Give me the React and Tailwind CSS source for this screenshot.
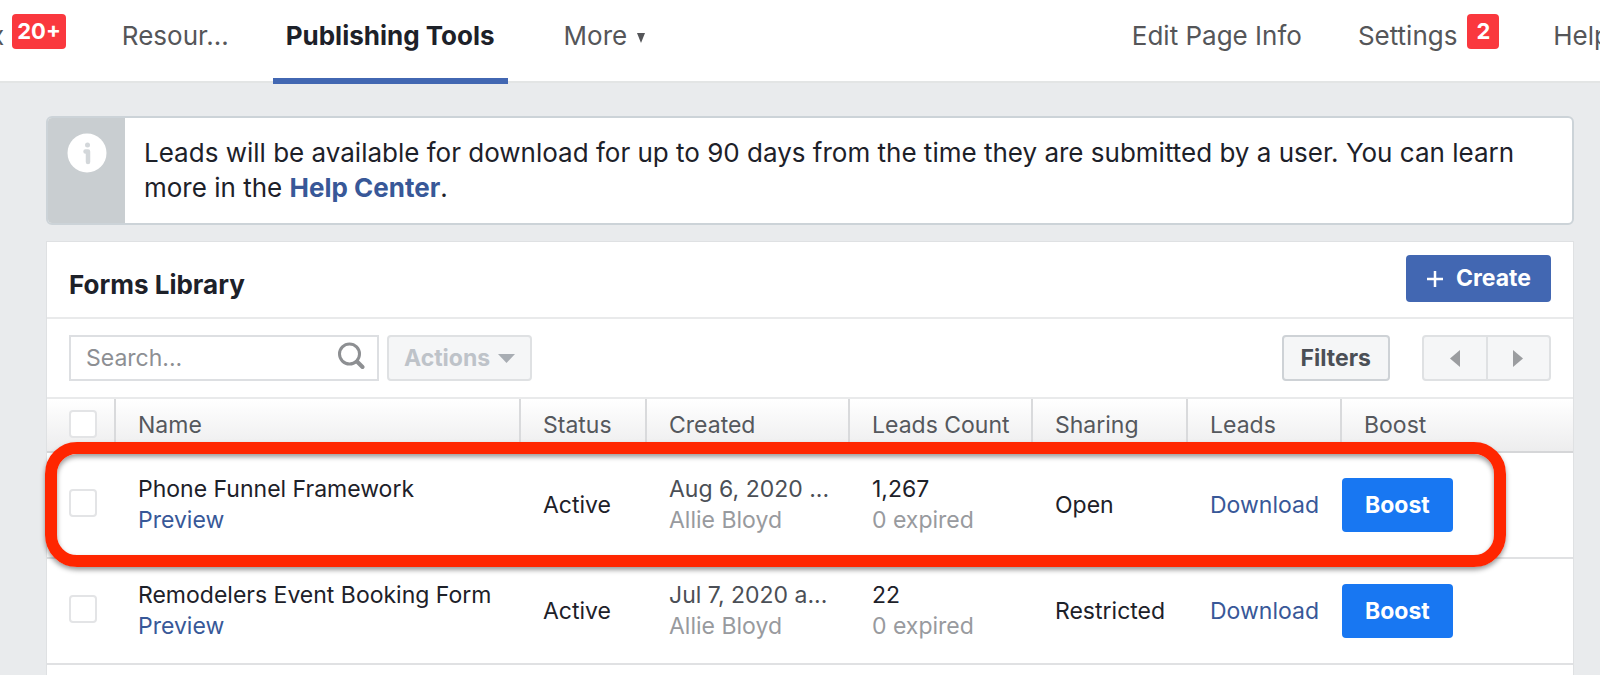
import React, { useState } from 'react';

const forms = [
  {
    id: 1,
    name: 'Phone Funnel Framework',
    status: 'Active',
    created: 'Aug 6, 2020 ...',
    author: 'Allie Bloyd',
    leads: '1,267',
    expired: '0 expired',
    sharing: 'Open',
  },
  {
    id: 2,
    name: 'Remodelers Event Booking Form',
    status: 'Active',
    created: 'Jul 7, 2020 a...',
    author: 'Allie Bloyd',
    leads: '22',
    expired: '0 expired',
    sharing: 'Restricted',
  },
];

const columns = ['Name', 'Status', 'Created', 'Leads Count', 'Sharing', 'Leads', 'Boost'];

const Badge = ({ children }) => (
  <span className="rounded-sm bg-[#fa383e] px-[5px] text-[22px] leading-[35px] font-bold text-white">
    {children}
  </span>
);

const Checkbox = ({ label, checked, onChange }) => (
  <input
    type="checkbox"
    aria-label={label}
    checked={checked}
    onChange={onChange}
    className="block size-7 appearance-none rounded-sm border-2 border-[#e3e4e6] bg-white checked:bg-[#4267b2]"
  />
);

const TopNav = () => (
  <nav className="flex h-[83px] items-start justify-between border-b-2 border-[#e3e5e5] bg-white text-[26px] leading-[72px] whitespace-nowrap text-[#555659]">
    <div className="flex">
      <a href="#inbox" className="-ml-[10px] flex items-start gap-2">
        x
        <span className="flex pt-[14px]">
          <Badge>20+</Badge>
        </span>
      </a>
      <a href="#resources" className="ml-14">Resour...</a>
      <a
        href="#publishing"
        className="ml-11 h-[84px] border-b-[6px] border-[#4267b2] px-[13px] font-bold text-[#1d2129]"
      >
        Publishing Tools
      </a>
      <button type="button" className="ml-14 flex h-[72px] items-center gap-[10px]">
        More
        <svg className="mt-1 h-[10px] w-2" viewBox="0 0 9 11" fill="currentColor">
          <path d="M0 0h9L4.500 11z" />
        </svg>
      </button>
    </div>
    <div className="-mr-[10px] flex">
      <a href="#edit">Edit Page Info</a>
      <a href="#settings" className="ml-14 flex items-start gap-[10px]">
        Settings
        <span className="flex pt-[14px]">
          <Badge>
            <span className="px-1">2</span>
          </Badge>
        </span>
      </a>
      <a href="#help" className="ml-[54px]">Help</a>
    </div>
  </nav>
);

const Notice = () => (
  <div className="flex overflow-hidden rounded-md border-2 border-[#ccd3d8] bg-white">
    <div className="flex w-[77px] shrink-0 justify-center bg-[#c9ced1] pt-[15px]">
      <svg className="size-10" viewBox="0 0 40 40">
        <circle cx="20" cy="20" r="19.500" fill="#fff" />
        <circle cx="20.500" cy="12" r="2.500" fill="#d3d7da" />
        <path d="M18.500 18.500h2.500v10.500" fill="none" stroke="#d3d7da" strokeWidth="4.500" strokeLinecap="round" strokeLinejoin="round" />
      </svg>
    </div>
    <p className="px-[19px] pt-[17px] pb-[18px] text-[26px] leading-[35px] text-[#1d2129]">
      Leads will be available for download for up to 90 days from the time they are submitted by a user. You can learn
      more in the{' '}
      <a href="#help-center" className="font-bold text-[#385898]">Help Center</a>.
    </p>
  </div>
);

const Toolbar = ({ search, setSearch }) => (
  <div className="flex items-center border-b-2 border-[#e9eaeb] px-[22px] py-4">
    <div className="flex h-[46px] w-[310px] items-center border-2 border-[#dddfe2] bg-white pr-3 pl-[15px]">
      <input
        type="text"
        aria-label="Search..."
        placeholder="Search..."
        value={search}
        onChange={(e) => setSearch(e.target.value)}
        className="min-w-0 flex-1 outline-none placeholder:text-[#8d8f93]"
      />
      <svg className="-mt-1 size-7" viewBox="0 0 28 28" fill="none" stroke="#8d8f92">
        <circle cx="12.500" cy="12" r="10" strokeWidth="3" />
        <path d="M20 19.500l5.500 5.500" strokeWidth="4" strokeLinecap="round" />
      </svg>
    </div>
    <button
      type="button"
      disabled
      className="ml-2 flex h-[46px] items-center gap-2 rounded-sm border-2 border-[#dfe1e3] bg-[#f5f6f7] px-[15px] font-bold text-[#bec3c9]"
    >
      Actions
      <svg className="h-[9px] w-[17px]" viewBox="0 0 17 9" fill="#a8adb3">
        <path d="M0 0h17L8.500 9z" />
      </svg>
    </button>
    <button
      type="button"
      className="ml-auto h-[46px] rounded-sm border-2 border-[#ced2d6] bg-[#f5f6f7] px-[17px] font-bold text-[#4b4f56]"
    >
      Filters
    </button>
    <div className="ml-8 flex h-[46px] w-[129px] rounded-sm border-2 border-[#dfe1e3] bg-[#f5f6f7] text-[#9b9da0]">
      <button type="button" aria-label="Previous" className="flex flex-1 items-center justify-center border-r-2 border-[#dfe1e3]">
        <svg className="h-[17px] w-[10px]" viewBox="0 0 10 17" fill="currentColor">
          <path d="M10 0v17L0 8.500z" />
        </svg>
      </button>
      <button type="button" aria-label="Next" className="flex flex-1 items-center justify-center">
        <svg className="h-[17px] w-[10px]" viewBox="0 0 10 17" fill="currentColor">
          <path d="M0 0v17l10-8.500z" />
        </svg>
      </button>
    </div>
  </div>
);

const FormsTable = ({ rows, selected, setSelected }) => {
  const allSelected = rows.length > 0 && selected.length === rows.length;

  const toggleAll = () => setSelected(allSelected ? [] : rows.map((row) => row.id));

  const toggleRow = (id) =>
    setSelected(selected.includes(id) ? selected.filter((item) => item !== id) : [...selected, id]);

  return (
    <div className="relative">
      <table className="w-full table-fixed border-separate border-spacing-0 text-left text-[#1d2129]">
        <colgroup>
          <col className="w-[69px]" />
          <col className="w-[405px]" />
          <col className="w-[126px]" />
          <col className="w-[203px]" />
          <col className="w-[183px]" />
          <col className="w-[155px]" />
          <col className="w-[154px]" />
          <col />
        </colgroup>
        <thead className="bg-linear-to-b from-white to-[#ececed] text-[#55585d]">
          <tr className="h-[54px]">
            <th className="border-r-2 border-b-2 border-r-[#d9dadc] border-b-[#d5d6d8] pb-[2px] pl-[22px]">
              <Checkbox label="All" checked={allSelected} onChange={toggleAll} />
            </th>
            {columns.map((column) => (
              <th
                key={column}
                className="border-r-2 border-b-2 border-r-[#d9dadc] border-b-[#d5d6d8] pl-[22px] font-normal last:border-r-0"
              >
                {column}
              </th>
            ))}
          </tr>
        </thead>
        <tbody>
          {rows.map((row) => (
            <tr key={row.id} className="h-[106px] *:border-b-2 *:border-[#e0e1e3]">
              <td className="pb-1 pl-[22px]">
                <Checkbox label={row.name} checked={selected.includes(row.id)} onChange={() => toggleRow(row.id)} />
              </td>
              <td className="pl-[22px] leading-[31px]">
                <div>{row.name}</div>
                <a href="#preview" className="text-[#385898]">Preview</a>
              </td>
              <td className="pl-[22px]">{row.status}</td>
              <td className="pl-[22px] leading-[31px] whitespace-nowrap">
                <div className="text-[#4b4f56]">{row.created}</div>
                <div className="text-[#989a9e]">{row.author}</div>
              </td>
              <td className="pl-[22px] leading-[31px]">
                <div>{row.leads}</div>
                <div className="text-[#989a9e]">{row.expired}</div>
              </td>
              <td className="pl-[22px]">{row.sharing}</td>
              <td className="pl-[22px]">
                <a href="#download" className="text-[#385898]">Download</a>
              </td>
              <td>
                <button type="button" className="h-[54px] rounded-sm bg-[#1877f2] px-[23px] font-bold text-white">
                  Boost
                </button>
              </td>
            </tr>
          ))}
        </tbody>
      </table>

      {/* Highlight around the first form */}
      <div className="pointer-events-none absolute top-[43px] right-[67px] -left-[2px] h-[125px] rounded-[32px] border-12 border-[#ff2600] shadow-[0_3px_5px_rgba(0,0,0,0.4),inset_0_3px_5px_rgba(0,0,0,0.4)]" />
    </div>
  );
};

const App = () => {
  const [search, setSearch] = useState('');
  const [selected, setSelected] = useState([]);

  const rows = forms.filter((form) => form.name.toLowerCase().includes(search.toLowerCase()));

  return (
    <div className="flex h-screen flex-col overflow-hidden bg-[#e9ebed] font-['Inter',sans-serif]">
      <TopNav />
      <main className="flex flex-1 flex-col gap-4 pt-[33px] pr-[26px] pl-[46px]">
        <Notice />
        <section className="flex-1 border border-b-0 border-[#dfe1e3] bg-white text-[23px]">
          <header className="flex items-start justify-between border-b-2 border-[#e9eaeb] px-[22px] pt-[13px] pb-[14px]">
            <h2 className="pt-3 text-[26px] leading-9 font-bold text-[#1d2129]">Forms Library</h2>
            <button
              type="button"
              className="flex h-[47px] items-center gap-3 rounded-sm bg-[#4267b2] px-5 font-bold text-white"
            >
              <svg className="size-[18px]" viewBox="0 0 18 18" fill="none" stroke="currentColor" strokeWidth="2.500">
                <path d="M9 1v16M1 9h16" />
              </svg>
              Create
            </button>
          </header>
          <Toolbar search={search} setSearch={setSearch} />
          <FormsTable rows={rows} selected={selected} setSelected={setSelected} />
        </section>
      </main>
    </div>
  );
};

export default App;
